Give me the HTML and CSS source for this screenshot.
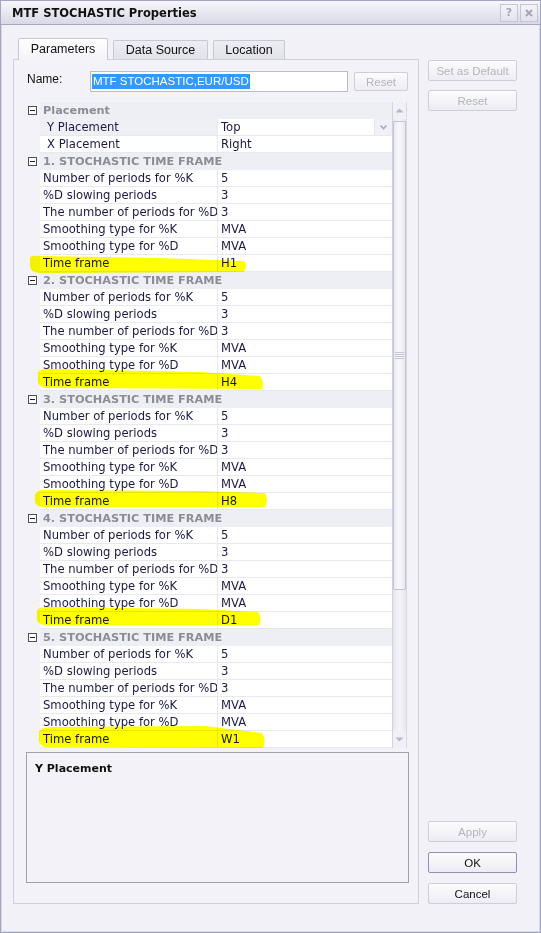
FILE: index.html
```html
<!DOCTYPE html>
<html>
<head>
<meta charset="utf-8">
<link rel="stylesheet" href="styles.css">
</head>
<body>
<div class="window">
  <div class="titlebar">
    <span class="title">MTF STOCHASTIC Properties</span>
    <div class="tbtns">
      <span class="tbtn">?</span>
      <span class="tbtn">
        <svg width="10" height="10" viewBox="0 0 10 10"><path d="M2 2 L8 8 M8 2 L2 8" stroke="#a4a4b4" stroke-width="2"/></svg>
      </span>
    </div>
  </div>
  <div class="main">
    <div class="left">
      <div class="tabs">
        <div class="tab active t1">Parameters</div>
        <div class="tab t2">Data Source</div>
        <div class="tab t3">Location</div>
      </div>
      <div class="panel">
        <div class="namerow">
          <span class="namelabel">Name:</span>
          <div class="input"><span class="sel">MTF STOCHASTIC,EUR/USD</span></div>
          <div class="btn dis small">Reset</div>
        </div>
        <div class="gridwrap">
          <div class="grid">
            <div class="hrow"><span class="minus"></span><span class="htext">Placement</span></div>
            <div class="row selrow"><span class="m"></span><span class="n in">Y Placement</span><span class="v">Top<span class="dd"><svg width="9" height="7" viewBox="0 0 9 7"><path d="M1.5 1.5 L4.5 4.5 L7.5 1.5" fill="none" stroke="#a8a8bc" stroke-width="1.6"/></svg></span></span></div>
            <div class="row"><span class="m"></span><span class="n in">X Placement</span><span class="v">Right</span></div>

            <div class="hrow"><span class="minus"></span><span class="htext">1. STOCHASTIC TIME FRAME</span></div>
            <div class="row"><span class="m"></span><span class="n">Number of periods for %K</span><span class="v">5</span></div>
            <div class="row"><span class="m"></span><span class="n">%D slowing periods</span><span class="v">3</span></div>
            <div class="row"><span class="m"></span><span class="n">The number of periods for %D</span><span class="v">3</span></div>
            <div class="row"><span class="m"></span><span class="n">Smoothing type for %K</span><span class="v">MVA</span></div>
            <div class="row"><span class="m"></span><span class="n">Smoothing type for %D</span><span class="v">MVA</span></div>
            <div class="row"><span class="m"></span><span class="n">Time frame</span><span class="v">H1</span></div>

            <div class="hrow"><span class="minus"></span><span class="htext">2. STOCHASTIC TIME FRAME</span></div>
            <div class="row"><span class="m"></span><span class="n">Number of periods for %K</span><span class="v">5</span></div>
            <div class="row"><span class="m"></span><span class="n">%D slowing periods</span><span class="v">3</span></div>
            <div class="row"><span class="m"></span><span class="n">The number of periods for %D</span><span class="v">3</span></div>
            <div class="row"><span class="m"></span><span class="n">Smoothing type for %K</span><span class="v">MVA</span></div>
            <div class="row"><span class="m"></span><span class="n">Smoothing type for %D</span><span class="v">MVA</span></div>
            <div class="row"><span class="m"></span><span class="n">Time frame</span><span class="v">H4</span></div>

            <div class="hrow"><span class="minus"></span><span class="htext">3. STOCHASTIC TIME FRAME</span></div>
            <div class="row"><span class="m"></span><span class="n">Number of periods for %K</span><span class="v">5</span></div>
            <div class="row"><span class="m"></span><span class="n">%D slowing periods</span><span class="v">3</span></div>
            <div class="row"><span class="m"></span><span class="n">The number of periods for %D</span><span class="v">3</span></div>
            <div class="row"><span class="m"></span><span class="n">Smoothing type for %K</span><span class="v">MVA</span></div>
            <div class="row"><span class="m"></span><span class="n">Smoothing type for %D</span><span class="v">MVA</span></div>
            <div class="row"><span class="m"></span><span class="n">Time frame</span><span class="v">H8</span></div>

            <div class="hrow"><span class="minus"></span><span class="htext">4. STOCHASTIC TIME FRAME</span></div>
            <div class="row"><span class="m"></span><span class="n">Number of periods for %K</span><span class="v">5</span></div>
            <div class="row"><span class="m"></span><span class="n">%D slowing periods</span><span class="v">3</span></div>
            <div class="row"><span class="m"></span><span class="n">The number of periods for %D</span><span class="v">3</span></div>
            <div class="row"><span class="m"></span><span class="n">Smoothing type for %K</span><span class="v">MVA</span></div>
            <div class="row"><span class="m"></span><span class="n">Smoothing type for %D</span><span class="v">MVA</span></div>
            <div class="row"><span class="m"></span><span class="n">Time frame</span><span class="v">D1</span></div>

            <div class="hrow"><span class="minus"></span><span class="htext">5. STOCHASTIC TIME FRAME</span></div>
            <div class="row"><span class="m"></span><span class="n">Number of periods for %K</span><span class="v">5</span></div>
            <div class="row"><span class="m"></span><span class="n">%D slowing periods</span><span class="v">3</span></div>
            <div class="row"><span class="m"></span><span class="n">The number of periods for %D</span><span class="v">3</span></div>
            <div class="row"><span class="m"></span><span class="n">Smoothing type for %K</span><span class="v">MVA</span></div>
            <div class="row"><span class="m"></span><span class="n">Smoothing type for %D</span><span class="v">MVA</span></div>
            <div class="row"><span class="m"></span><span class="n">Time frame</span><span class="v">W1</span></div>

            <svg class="marks" width="381" height="646" viewBox="26 102 381 646">
              <path d="M30 258 Q31 255 40 256 L160 258 L244 261 Q248 266 244 272 L40 273 Q29 272 30 265 Z"/>
              <path d="M38 373 Q40 368 52 369 L200 372 L260 376 Q265 382 262 389 L45 388 Q37 386 38 379 Z"/>
              <path d="M35 495 Q37 489 48 490 L200 491 L265 493 Q269 500 265 507 L42 507 Q34 505 35 499 Z"/>
              <path d="M37 611 Q38 607 48 607 L200 609 L258 612 Q263 618 259 625 L44 625 Q36 623 37 617 Z"/>
              <path d="M39 732 Q40 727 55 727 L205 726 L262 733 Q267 740 263 748 L45 747 Q38 745 39 738 Z"/>
            </svg>
          </div>
          <div class="scrollbar">
            <div class="arrow"><svg width="9" height="5" viewBox="0 0 9 5"><path d="M0.5 4.5 L4.5 0.5 L8.5 4.5 Z" fill="#b6b6cc"/></svg></div>
            <div class="thumb"><span class="grip"></span></div>
            <div class="track"></div>
            <div class="arrow"><svg width="9" height="5" viewBox="0 0 9 5"><path d="M0.5 0.5 L4.5 4.5 L8.5 0.5 Z" fill="#b6b6cc"/></svg></div>
          </div>
        </div>
        <div class="desc"><span class="desctitle">Y Placement</span></div>
      </div>
    </div>
    <div class="right">
      <div class="btn dis">Set as Default</div>
      <div class="btn dis">Reset</div>
      <div class="bottom">
        <div class="btn dis">Apply</div>
        <div class="btn def">OK</div>
        <div class="btn">Cancel</div>
      </div>
    </div>
  </div>
</div>
</body>
</html>
```

FILE: styles.css
```css
* { box-sizing: border-box; }
html, body { margin: 0; padding: 0; }
body { width: 541px; height: 933px; background: #f1f1f7; overflow: hidden; }

.window {
  width: 541px; height: 933px;
  border: 1px solid #a3a5c2;
  box-shadow: inset 1px 0 0 #d9d9e6, inset -1px 0 0 #d9d9e6, inset 0 -1px 0 #d9d9e6;
  background: #f1f1f7;
  display: flex; flex-direction: column;
  font-family: "DejaVu Sans", Verdana, sans-serif;
}

.titlebar {
  height: 24px; flex: none;
  border-bottom: 1px solid #a6a8c2;
  background: linear-gradient(#f6f6fa, #e6e6ef 55%, #d9d9e6);
  display: flex; align-items: center; justify-content: space-between;
  padding: 0 2px 0 11px;
}
.title { font-weight: bold; font-size: 11.5px; color: #111; }
.tbtns { display: flex; gap: 2px; }
.tbtn {
  width: 18px; height: 18px;
  border: 1px solid #c3c4d4;
  background: linear-gradient(#f4f4f8, #e2e2ec);
  display: flex; align-items: center; justify-content: center;
  font-weight: bold; font-size: 11px; color: #a4a4b4;
}

.main { flex: 1; display: flex; padding: 13px 0 0 12px; align-items: flex-start; }

.left { width: 406px; display: flex; flex-direction: column; }

.tabs { height: 21px; display: flex; gap: 5px; padding-left: 5px; align-items: flex-end; position: relative; z-index: 1; }
.tab {
  height: 19px;
  border: 1px solid #c7c8d6; border-bottom: none;
  border-radius: 2px 2px 0 0;
  background: linear-gradient(#ededf3, #e2e2ea);
  font-family: "Liberation Sans", Arial, sans-serif; font-size: 12.5px; color: #111;
  display: flex; align-items: center; justify-content: center;
}
.tab.active {
  height: 22px; margin-bottom: -1px;
  background: linear-gradient(#ffffff, #f3f3f8);
  padding-bottom: 2px;
}
.t1 { width: 90px; }
.t2 { width: 95px; }
.t3 { width: 72px; }

.panel {
  height: 845px;
  border: 1px solid #cfd0dc;
  background: #f2f2f8;
  padding: 11px 9px 0 12px;
  display: flex; flex-direction: column;
}

.namerow { height: 21px; display: flex; align-items: flex-start; }
.namelabel { font-family: "Liberation Sans", Arial, sans-serif; font-size: 12px; color: #111; width: 64px; padding-left: 1px; line-height: 17px; }
.input {
  width: 258px; height: 21px;
  border: 1px solid #b8bccc; background: #fff;
  padding: 2px 0 0 1px;
  font-family: "Liberation Sans", Arial, sans-serif; font-size: 11.5px;
}
.sel { background: #3399ff; color: #fff; display: inline-block; line-height: 15px; padding: 0 1px; }

.btn {
  height: 21px;
  border: 1px solid #cdcedc; border-radius: 2px;
  background: linear-gradient(#fcfcfe, #ececf3);
  font-family: "Liberation Sans", Arial, sans-serif; font-size: 11.5px; color: #111;
  display: flex; align-items: center; justify-content: center;
}
.btn.dis { color: #b4b4be; }
.btn.def { border-color: #8e90b6; }
.btn.small { width: 54px; height: 19px; margin: 1px 0 0 6px; }

.gridwrap { margin-top: 10px; height: 646px; width: 381px; display: flex; }
.grid { width: 366px; height: 646px; position: relative; overflow: hidden; }

.hrow { height: 17px; display: flex; align-items: center; background: linear-gradient(90deg, #f2f2f8 14px, #eeeef5 14px); }
.minus {
  width: 9px; height: 9px; margin: 0 3px 0 2px;
  border: 1px solid #505058; background: #fff;
  position: relative; flex: none;
}
.minus::after { content: ""; position: absolute; left: 1px; right: 1px; top: 3px; height: 1px; background: #202028; }
.htext { font-weight: bold; font-size: 11.3px; color: #8c8c96; padding-left: 3px; white-space: nowrap; }

.row { height: 17px; display: flex; }
.row .m { width: 14px; flex: none; }
.row .n, .row .v {
  background: #fff; border-bottom: 1px solid #e8e8f0;
  font-size: 11.6px; color: #1a1a44; line-height: 16px;
  white-space: nowrap; overflow: hidden;
}
.row .n { width: 178px; flex: none; border-right: 1px solid #e8e8f0; padding-left: 3px; }
.row .n.in { padding-left: 7px; }
.row .v { width: 174px; flex: none; padding-left: 3px; position: relative; }
.selrow .n { background: #efeff6; }
.dd {
  position: absolute; right: 0; top: 0; width: 18px; height: 16px;
  background: #f0f0f6; border-left: 1px solid #e4e4ee;
  display: flex; align-items: center; justify-content: center;
}

.marks { position: absolute; left: 0; top: 0; mix-blend-mode: multiply; pointer-events: none; }
.marks path { fill: #ffff00; }

.scrollbar {
  width: 15px; height: 646px;
  border-left: 1px solid #d2d2e0;
  border-right: 1px solid #d8d8e4;
  background: linear-gradient(90deg, #e6e6f0, #f4f4f9 50%, #e6e6f0);
  display: flex; flex-direction: column; align-items: stretch;
}
.arrow { height: 17px; display: flex; align-items: center; justify-content: center; background: #f0f0f6; }
.thumb {
  height: 469px; margin-top: 2px;
  border: 1px solid #c2c3d8; border-radius: 1px;
  background: linear-gradient(90deg, #ebebf4, #f8f8fc 50%, #e8e8f2);
  display: flex; align-items: center; justify-content: center;
}
.grip {
  width: 9px; height: 7px;
  background: repeating-linear-gradient(#c6c6d6 0 1px, transparent 1px 2px);
}
.track { flex: 1; }

.desc {
  margin-top: 4px; width: 383px; height: 131px;
  border: 1px solid #a2a2a6;
  padding: 4px 8px;
}
.desctitle { font-weight: bold; font-size: 11px; color: #111; }

.right { width: 89px; margin-left: 9px; height: 866px; display: flex; flex-direction: column; padding-top: 22px; gap: 9px; }
.bottom { margin-top: auto; display: flex; flex-direction: column; gap: 10px; }
.bottom .btn { height: 21px; }
```
